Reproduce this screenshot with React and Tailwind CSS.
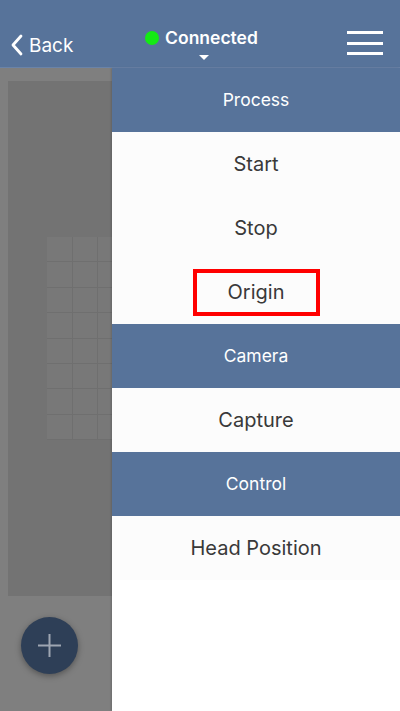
import React from "react";

const sections = [
  { title: "Process", items: ["Start", "Stop", "Origin"] },
  { title: "Camera", items: ["Capture"] },
  { title: "Control", items: ["Head Position"] },
];

function GridPlate() {
  const cells = Array.from({ length: 8 * 14 });
  return (
    <div className="ml-[39px] mt-[156px] grid grid-cols-[repeat(14,25.5px)] bg-[#787878]">
      {cells.map((_, i) => (
        <div key={i} className="h-[25.4px] border-r border-b border-[#6f6f6f]" />
      ))}
    </div>
  );
}

export default function App() {
  return (
    <div className="relative w-[400px] h-[711px] overflow-hidden bg-[#7f7f7f] font-['Inter',sans-serif]">
      {/* Top bar */}
      <header className="h-[68px] flex items-start pt-[27px] bg-[#57739a] border-b border-[#6a83a8] text-white">
        <div className="flex-1 flex items-center pl-[10px] pt-[7px]">
          <svg width="14" height="22" viewBox="0 0 14 22" className="mr-[5px] shrink-0">
            <polyline points="11,2 3,11 11,20" fill="none" stroke="white" strokeWidth="2.8" strokeLinecap="round" strokeLinejoin="round" />
          </svg>
          <span className="text-[19px] leading-none">Back</span>
        </div>
        <div className="flex flex-col items-center pt-[2px] ml-[10px]">
          <div className="flex items-center gap-[6px]">
            <span className="block shrink-0 w-[14px] h-[14px] min-w-[14px] rounded-full bg-[#14ea14]" />
            <span className="text-[17.5px] font-semibold leading-none">Connected</span>
          </div>
          <svg width="10" height="5" viewBox="0 0 10 5" className="mt-[8px] ml-[4px]">
            <polygon points="0,0 10,0 5,5" fill="white" />
          </svg>
        </div>
        <div className="flex-1 flex justify-end pr-[17px]">
          <div className="flex flex-col gap-[7.5px] w-[36px] pt-[4px]">
            <span className="h-[3px] bg-white" />
            <span className="h-[3px] bg-white" />
            <span className="h-[3px] bg-white" />
          </div>
        </div>
      </header>

      {/* Canvas */}
      <div className="pt-[13px] pl-[8px]">
        <div className="h-[515px] bg-[#737373] overflow-hidden">
          <GridPlate />
        </div>
      </div>

      {/* Floating add button */}
      <button className="absolute left-[21px] top-[617px] w-[57px] h-[57px] rounded-full bg-[#2e3f57] shadow-[0_2px_6px_rgba(0,0,0,0.35)] flex items-center justify-center">
        <svg width="25" height="25" viewBox="0 0 25 25">
          <path d="M12.5 1v23M1 12.5h23" stroke="#9ea6b2" strokeWidth="2" />
        </svg>
      </button>

      {/* Drawer menu */}
      <nav className="absolute left-[112px] top-[68px] right-0 bottom-0 bg-white shadow-[-1px_0_2px_rgba(0,0,0,0.15)]">
        {sections.map((s) => (
          <div key={s.title}>
            <div className="h-[64px] flex items-center justify-center bg-[#57739a] text-white text-[17.5px]">
              {s.title}
            </div>
            {s.items.map((item) => (
              <div key={item} className="h-[64px] flex items-center justify-center bg-[#fcfcfc] text-[#393939] text-[20px]">
                {item === "Origin" ? (
                  <span className="w-[127px] h-[47px] flex items-center justify-center border-[4px] border-[#ff0000]">
                    {item}
                  </span>
                ) : (
                  item
                )}
              </div>
            ))}
          </div>
        ))}
      </nav>
    </div>
  );
}
